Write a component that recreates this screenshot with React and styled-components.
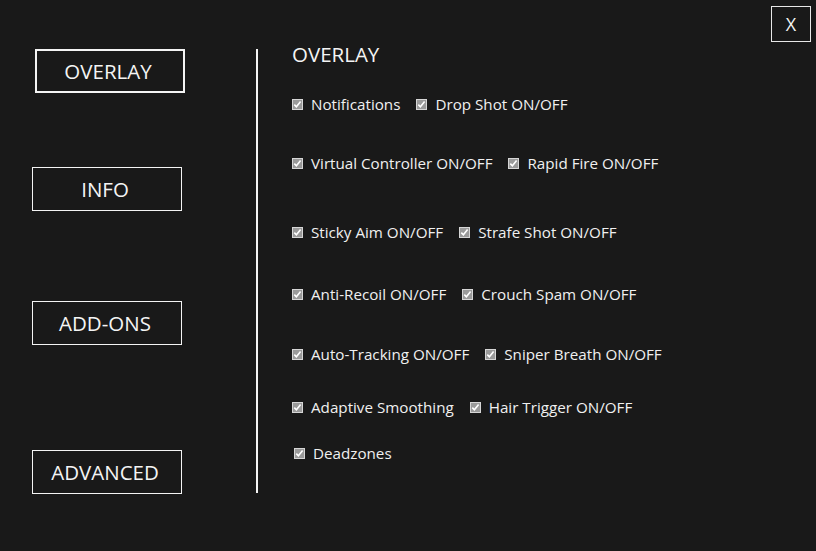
import React from "react";
import styled, { createGlobalStyle } from "styled-components";

const GlobalStyle = createGlobalStyle`
  html, body {
    margin: 0;
    padding: 0;
    background: #191919;
  }
  body {
    font-family: "Open Sans", "Noto Sans", sans-serif;
    color: #f2f2f2;
  }
`;

const Window = styled.div`
  position: relative;
  width: 816px;
  height: 551px;
  display: flex;
  background: #191919;
  overflow: hidden;
`;

const Sidebar = styled.div`
  width: 256px;
  display: flex;
  flex-direction: column;
  padding-top: 49px;
  box-sizing: border-box;
`;

const NavButton = styled.button`
  box-sizing: border-box;
  width: 150px;
  height: 44px;
  margin-top: ${(p) => p.gap || 0}px;
  margin-left: ${(p) => (p.active ? 35 : 32)}px;
  background: transparent;
  border: ${(p) => (p.active ? 2 : 1)}px solid #f4f4f4;
  color: #f4f4f4;
  font-family: "Open Sans", "Noto Sans", sans-serif;
  font-size: 20.5px;
  line-height: 26px;
  padding: 0 4px 0 0;
  cursor: pointer;
`;

const Divider = styled.div`
  width: 2px;
  height: 444px;
  margin-top: 49px;
  background: #f4f4f4;
`;

const Content = styled.div`
  display: flex;
  flex-direction: column;
  padding-left: 34px;
  padding-top: 41px;
`;

const Title = styled.h1`
  margin: 0;
  font-size: 20.5px;
  font-weight: 400;
  line-height: 26px;
  color: #f4f4f4;
`;

const Row = styled.div`
  display: flex;
  align-items: center;
  gap: 16px;
  height: 20px;
  margin-top: ${(p) => p.gap}px;
  margin-left: ${(p) => p.indent || 0}px;
`;

const Item = styled.label`
  display: flex;
  align-items: center;
  gap: 8px;
  font-size: 15.2px;
  color: #f0f0f0;
  white-space: nowrap;
`;

const Box = styled.svg`
  width: 11px;
  height: 11px;
  flex: none;
`;

const CloseButton = styled.button`
  position: absolute;
  top: 6px;
  left: 771px;
  width: 40px;
  height: 36px;
  box-sizing: border-box;
  background: transparent;
  border: 1px solid #e8e8e8;
  color: #f4f4f4;
  font-family: "Open Sans", "Noto Sans", sans-serif;
  font-size: 18px;
  padding: 0;
`;

const Check = ({ label }) => (
  <Item>
    <Box viewBox="0 0 11 11">
      <rect x="0.5" y="0.5" width="10" height="10" fill="#9a9a9a" stroke="#d6d6d6" />
      <path d="M2.3 5.6 L4.4 7.8 L8.6 2.6" fill="none" stroke="#ffffff" strokeWidth="1.6" />
    </Box>
    {label}
  </Item>
);

const rows = [
  { gap: 27, items: ["Notifications", "Drop Shot ON/OFF"] },
  { gap: 39, items: ["Virtual Controller ON/OFF", "Rapid Fire ON/OFF"] },
  { gap: 49, items: ["Sticky Aim ON/OFF", "Strafe Shot ON/OFF"] },
  { gap: 42, items: ["Anti-Recoil ON/OFF", "Crouch Spam ON/OFF"] },
  { gap: 40, items: ["Auto-Tracking ON/OFF", "Sniper Breath ON/OFF"] },
  { gap: 33, items: ["Adaptive Smoothing", "Hair Trigger ON/OFF"] },
  { gap: 26, items: ["Deadzones"], indent: 2 },
];

export default function App() {
  return (
    <>
      <GlobalStyle />
      <Window>
        <Sidebar>
          <NavButton active>OVERLAY</NavButton>
          <NavButton gap={74}>INFO</NavButton>
          <NavButton gap={90}>ADD-ONS</NavButton>
          <NavButton gap={105}>ADVANCED</NavButton>
        </Sidebar>
        <Divider />
        <Content>
          <Title>OVERLAY</Title>
          {rows.map((r, i) => (
            <Row key={i} gap={r.gap} indent={r.indent}>
              {r.items.map((t) => (
                <Check key={t} label={t} />
              ))}
            </Row>
          ))}
        </Content>
        <CloseButton>X</CloseButton>
      </Window>
    </>
  );
}
